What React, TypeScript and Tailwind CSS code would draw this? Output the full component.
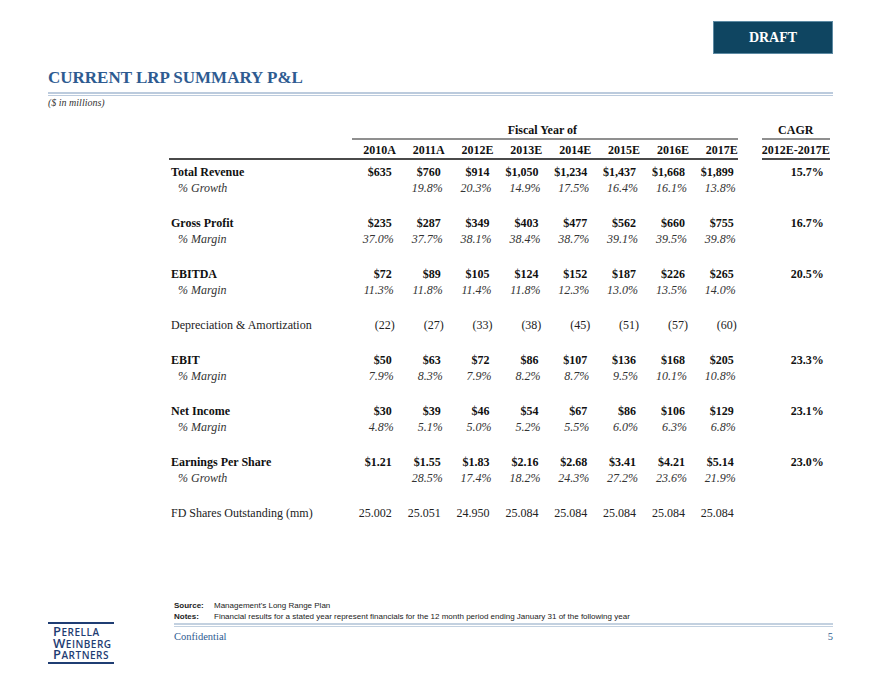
import React from "react";

type Kind = "bold" | "pct" | "plain" | "paren";

type Line = {
  label: string;
  kind: Kind;
  values: string[];
  cagr?: string;
};

const GRID = "grid grid-cols-[178px_repeat(8,48.85px)_24px_68px]";

const years = ["2010A", "2011A", "2012E", "2013E", "2014E", "2015E", "2016E", "2017E"];

const groups: Line[][] = [
  [
    { label: "Total Revenue", kind: "bold", values: ["$635", "$760", "$914", "$1,050", "$1,234", "$1,437", "$1,668", "$1,899"], cagr: "15.7%" },
    { label: "% Growth", kind: "pct", values: ["", "19.8%", "20.3%", "14.9%", "17.5%", "16.4%", "16.1%", "13.8%"] },
  ],
  [
    { label: "Gross Profit", kind: "bold", values: ["$235", "$287", "$349", "$403", "$477", "$562", "$660", "$755"], cagr: "16.7%" },
    { label: "% Margin", kind: "pct", values: ["37.0%", "37.7%", "38.1%", "38.4%", "38.7%", "39.1%", "39.5%", "39.8%"] },
  ],
  [
    { label: "EBITDA", kind: "bold", values: ["$72", "$89", "$105", "$124", "$152", "$187", "$226", "$265"], cagr: "20.5%" },
    { label: "% Margin", kind: "pct", values: ["11.3%", "11.8%", "11.4%", "11.8%", "12.3%", "13.0%", "13.5%", "14.0%"] },
  ],
  [
    { label: "Depreciation & Amortization", kind: "paren", values: ["(22)", "(27)", "(33)", "(38)", "(45)", "(51)", "(57)", "(60)"] },
  ],
  [
    { label: "EBIT", kind: "bold", values: ["$50", "$63", "$72", "$86", "$107", "$136", "$168", "$205"], cagr: "23.3%" },
    { label: "% Margin", kind: "pct", values: ["7.9%", "8.3%", "7.9%", "8.2%", "8.7%", "9.5%", "10.1%", "10.8%"] },
  ],
  [
    { label: "Net Income", kind: "bold", values: ["$30", "$39", "$46", "$54", "$67", "$86", "$106", "$129"], cagr: "23.1%" },
    { label: "% Margin", kind: "pct", values: ["4.8%", "5.1%", "5.0%", "5.2%", "5.5%", "6.0%", "6.3%", "6.8%"] },
  ],
  [
    { label: "Earnings Per Share", kind: "bold", values: ["$1.21", "$1.55", "$1.83", "$2.16", "$2.68", "$3.41", "$4.21", "$5.14"], cagr: "23.0%" },
    { label: "% Growth", kind: "pct", values: ["", "28.5%", "17.4%", "18.2%", "24.3%", "27.2%", "23.6%", "21.9%"] },
  ],
  [
    { label: "FD Shares Outstanding (mm)", kind: "plain", values: ["25.002", "25.051", "24.950", "25.084", "25.084", "25.084", "25.084", "25.084"] },
  ],
];

function Row({ line }: { line: Line }) {
  const labelCls =
    line.kind === "bold"
      ? "pl-[2px] font-bold text-[#111]"
      : line.kind === "pct"
        ? "pl-[9px] italic text-[#333]"
        : "pl-[2px] text-[#222]";
  const valueCls =
    line.kind === "bold"
      ? "pr-[4px] font-bold text-[#111]"
      : line.kind === "pct"
        ? "pr-[2px] italic text-[#333]"
        : line.kind === "paren"
          ? "pr-[1px] text-[#222]"
          : "pr-[4px] text-[#222]";

  return (
    <div className={`${GRID} h-[16px] leading-[16px] text-[12px]`}>
      <div className={`whitespace-nowrap ${labelCls}`}>{line.label}</div>
      {line.values.map((v, i) => (
        <div key={i} className={`text-right whitespace-nowrap ${valueCls}`}>
          {v}
        </div>
      ))}
      <div />
      <div className="text-right pr-[6px] font-bold text-[#111]">{line.cagr ?? ""}</div>
    </div>
  );
}

function Logo() {
  return (
    <div className="w-[66px] shrink-0 flex flex-col text-[#1f3d73] font-['Open_Sans',sans-serif] font-semibold">
      <div className="h-[2px] bg-[#1f3d73]" />
      <div className="mt-[1px] pl-[5px] flex flex-col tracking-[0.5px]">
        <div className="h-[11.5px] leading-[11.5px] whitespace-nowrap">
          <span className="text-[13px]">P</span>
          <span className="text-[10px]">ERELLA</span>
        </div>
        <div className="h-[11.5px] leading-[11.5px] whitespace-nowrap">
          <span className="text-[13px]">W</span>
          <span className="text-[10px]">EINBERG</span>
        </div>
        <div className="h-[11.5px] leading-[11.5px] whitespace-nowrap">
          <span className="text-[13px]">P</span>
          <span className="text-[10px]">ARTNERS</span>
        </div>
      </div>
      <div className="mt-[2px] h-[2px] bg-[#1f3d73]" />
    </div>
  );
}

export default function App() {
  return (
    <div className="w-[880px] h-[680px] bg-white overflow-hidden font-['Liberation_Serif',serif] text-[#1a1a1a]">

      {/* Draft tag */}
      <div className="flex justify-end pt-[21px] pr-[47px]">
        <div className="w-[120px] h-[33px] bg-[#0f4561] border border-[#5d8aa3] flex items-center justify-center text-white font-bold text-[14px] leading-none">
          DRAFT
        </div>
      </div>

      {/* Title */}
      <div className="pl-[48px] pr-[47px]">
        <h1 className="mt-[14px] h-[20px] leading-[20px] text-[17px] font-bold text-[#2e5b91] whitespace-nowrap">
          CURRENT LRP SUMMARY P&amp;L
        </h1>
        <div className="mt-[4px] flex flex-col gap-[1px]">
          <div className="h-[2px] bg-[#bccbdd]" />
          <div className="h-[1px] bg-[#bccbdd]" />
        </div>
        <p className="mt-[1px] h-[12px] leading-[12px] text-[10px] italic text-[#333]">($ in millions)</p>
      </div>

      {/* Table */}
      <div className="pl-[169px] mt-[14px]">
        <div className={`${GRID} h-[15px] leading-[15px] text-[12px] font-bold text-[#111]`}>
          <div />
          <div className="col-span-8 text-center">Fiscal Year of</div>
          <div />
          <div className="text-center">CAGR</div>
        </div>
        <div className={`${GRID} h-[2px]`}>
          <div />
          <div className="col-span-8 ml-[5px] h-[2px] bg-[#8f8f8f]" />
          <div />
          <div className="h-[2px] bg-[#8f8f8f]" />
        </div>
        <div className={`${GRID} mt-[3px] h-[15px] leading-[15px] text-[12px] font-bold text-[#111]`}>
          <div />
          {years.map((y) => (
            <div key={y} className="text-right">
              {y}
            </div>
          ))}
          <div />
          <div className="text-center whitespace-nowrap">2012E-2017E</div>
        </div>
        <div className={`${GRID} h-[2px]`}>
          <div className="col-span-9 h-[2px] bg-[#4a4a4a]" />
          <div />
          <div className="h-[2px] bg-[#4a4a4a]" />
        </div>

        <div className="mt-[4px] flex flex-col gap-[19px]">
          {groups.map((g, gi) => (
            <div key={gi}>
              {g.map((line, li) => (
                <Row key={li} line={line} />
              ))}
            </div>
          ))}
        </div>
      </div>

      {/* Footer */}
      <div className="mt-[79px] flex pl-[48px] pr-[47px]">
        <div className="mt-[22px]">
          <Logo />
        </div>

        <div className="ml-[60px] flex-1">
          <div className="font-['Liberation_Sans',sans-serif] text-[8px] leading-[11px] text-[#222]">
            <div className="flex">
              <span className="w-[40px] font-bold">Source:</span>
              <span>Management&apos;s Long Range Plan</span>
            </div>
            <div className="flex">
              <span className="w-[40px] font-bold">Notes:</span>
              <span>
                Financial results for a stated year represent financials for the 12 month period ending January 31 of the following year
              </span>
            </div>
          </div>
          <div className="mt-[1px] flex flex-col gap-[1px]">
            <div className="h-[2px] bg-[#c3d1e0]" />
            <div className="h-[1px] bg-[#c3d1e0]" />
          </div>
          <div className="mt-[3px] flex justify-between text-[10.5px] leading-[14px] text-[#2e5b91]">
            <span>Confidential</span>
            <span>5</span>
          </div>
        </div>
      </div>

    </div>
  );
}
